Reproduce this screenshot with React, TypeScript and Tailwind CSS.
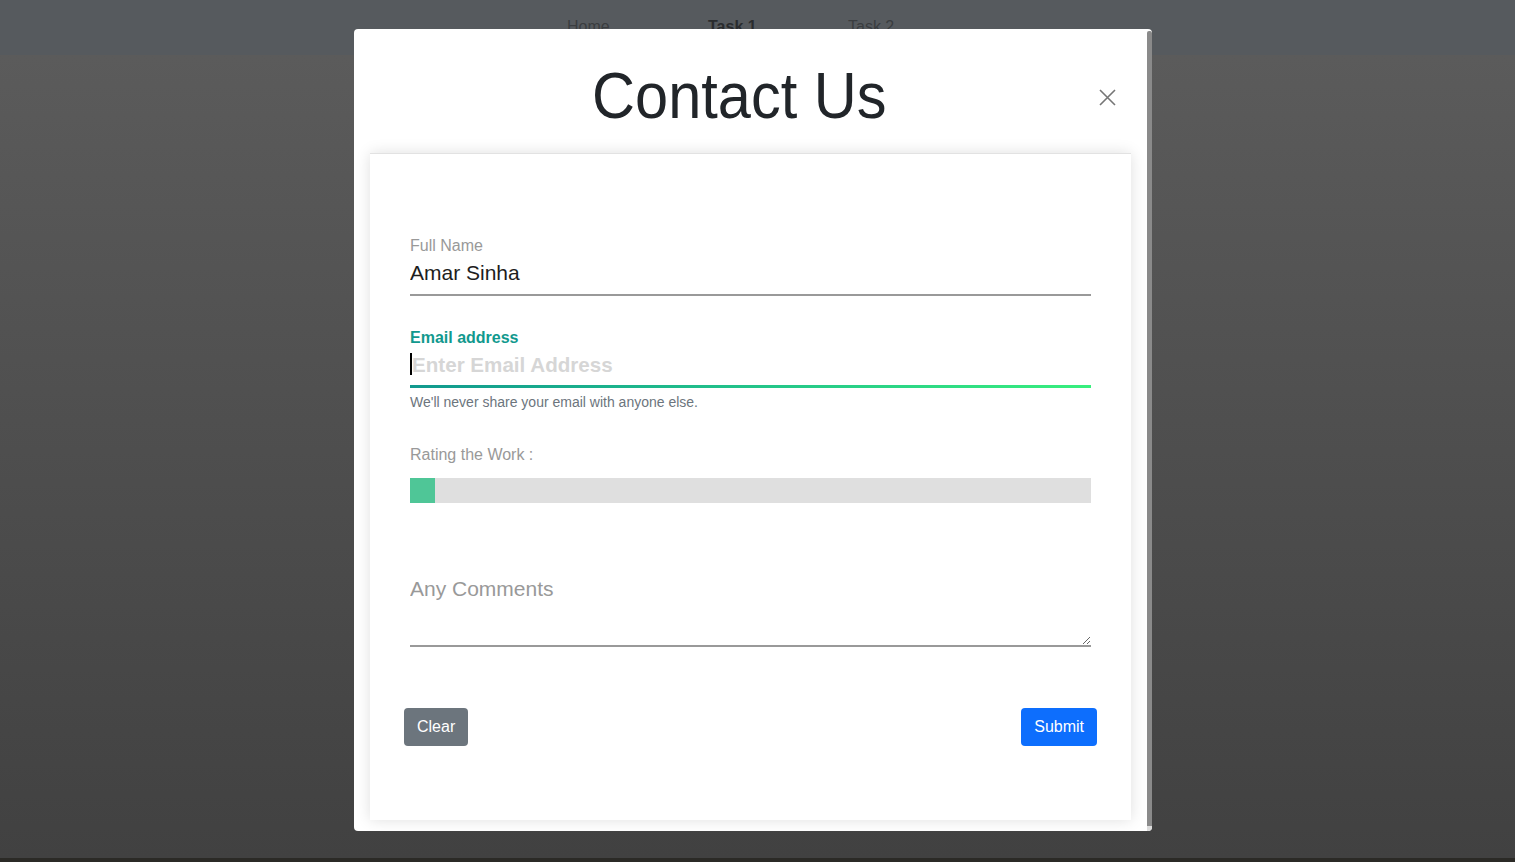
import React from "react";

export default function App() {
  return (
    <div className="relative h-[862px] w-[1515px] overflow-hidden font-['Liberation_Sans',Arial,sans-serif]">
      {/* page behind overlay */}
      <div className="flex h-[55px] bg-[#565a5e] pl-[567px] pt-[17px] text-[16px] leading-[20px]">
        <span className="w-[141px] text-[#3a3d40]">Home</span>
        <span className="w-[140px] font-bold text-[#2a2c2e]">Task 1</span>
        <span className="text-[#3a3d40]">Task 2</span>
      </div>
      <div className="h-[803px] bg-linear-to-b from-[#5b5b5b] to-[#414141]" />
      <div className="h-[4px] bg-[#2b2a26]" />

      {/* modal */}
      <div className="absolute left-[354px] top-[29px] flex h-[802px] w-[798px] overflow-hidden rounded-[4px] bg-white">
        <div className="flex w-[793px] flex-col">
          <div className="flex h-[124px] items-start px-4">
            <h1 className="mt-[35px] flex-1 pl-[25px] text-center text-[64px] leading-[64px] text-[#212529]">
              <span className="inline-block scale-x-[0.93]">Contact Us</span>
            </h1>
            <button className="mt-[44px] flex h-[48px] w-[48px] items-center justify-center">
              <svg width="17" height="17" viewBox="0 0 17 17">
                <path d="M1 1 L16 16 M16 1 L1 16" stroke="#767676" strokeWidth="1.6" fill="none" />
              </svg>
            </button>
          </div>

          <div className="mx-4 flex h-[667px] flex-col border-t border-[#e2e2e2] bg-white px-[40px] pt-[83px] shadow-[0_0_14px_rgba(0,0,0,0.13)]">
            <label className="block text-[16px] leading-[18px] text-[#999]">Full Name</label>
            <input
              defaultValue="Amar Sinha"
              className="h-[41px] w-full border-b-2 border-[#999] pb-[4px] text-[21px] text-[#1d1d1d] outline-none"
            />

            <label className="mt-[33px] block text-[16px] font-bold leading-[18px] text-[#11998e]">
              Email address
            </label>
            <div className="relative">
              <input
                placeholder="Enter Email Address"
                className="h-[38px] w-full pb-[3px] pl-[2px] text-[20.6px] font-bold outline-none placeholder:text-[#d6d6d6]"
              />
              <div className="absolute left-0 top-[6px] h-[22px] w-[2px] bg-black" />
              <div className="h-[3px] w-full bg-linear-to-r from-[#11998e] to-[#38ef7d]" />
            </div>
            <div className="mt-[6px] text-[14px] leading-[16px] text-[#6c757d]">
              We'll never share your email with anyone else.
            </div>

            <label className="mt-[36px] block text-[16px] leading-[18px] text-[#999]">Rating the Work :</label>
            <div className="mt-[14px] flex h-[25px] w-full bg-[#dfdfdf]">
              <div className="h-[25px] w-[25px] bg-[#4fc697]" />
            </div>

            <textarea
              placeholder="Any Comments"
              className="mt-[70px] block h-[74px] w-full border-b-2 border-[#999] p-0 text-[21px] outline-none placeholder:text-[#999]"
            />

            <div className="-mx-[6px] mt-[61px] flex justify-between">
              <button className="h-[38px] rounded-[4px] bg-[#6c757d] px-[13px] text-[16px] text-white">Clear</button>
              <button className="h-[38px] rounded-[4px] bg-[#0d6efd] px-[13px] text-[16px] text-white">Submit</button>
            </div>
          </div>
        </div>
        <div className="flex w-[5px] flex-col pt-[2px]">
          <div className="flex-1 rounded-t-[2px] bg-[#8a8a8a]" />
          <div className="h-[5px] bg-[#dcdcdc]" />
        </div>
      </div>
    </div>
  );
}
